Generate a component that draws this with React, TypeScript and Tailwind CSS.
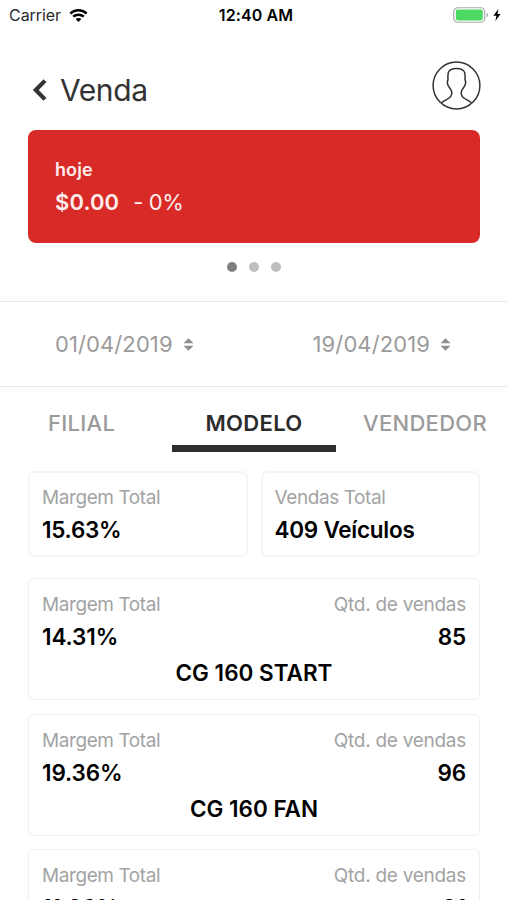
import React from "react";

type Model = { margin: string; count: string; name?: string };

const models: Model[] = [
  { margin: "14.31%", count: "85", name: "CG 160 START" },
  { margin: "19.36%", count: "96", name: "CG 160 FAN" },
  { margin: "11.96%", count: "91" },
];

function StatusBar() {
  return (
    <div className="grid h-[30px] shrink-0 grid-cols-3 items-center pl-[9px] pr-[6px] text-black">
      <div className="flex items-center gap-[8px]">
        <span className="text-[16px] tracking-[-0.05px] text-[#2b2b2b]">Carrier</span>
        <svg width="19" height="13" viewBox="0 0 20 14" fill="none" stroke="#000" strokeWidth="2.7">
          <path d="M1.2 4.9C6 0.3 14 0.3 18.8 4.9" />
          <path d="M4.3 8.3C7.4 5.4 12.6 5.4 15.7 8.3" />
          <path d="M10 14L6.9 10.9C8.6 9.3 11.4 9.3 13.1 10.9Z" fill="#000" stroke="none" />
        </svg>
      </div>
      <span className="pl-[2px] text-center text-[16px] font-semibold tracking-[0.1px]">12:40 AM</span>
      <div className="flex items-center justify-end gap-[4px]">
        <svg width="36" height="16" viewBox="0 0 36 16">
          <rect x="0.75" y="0.75" width="31" height="14.5" rx="4" fill="#fff" stroke="#a9a9a9" strokeWidth="1.2" />
          <rect x="2.8" y="2.6" width="27" height="10.8" rx="1.8" fill="#4cd964" />
          <path d="M33.6 5.5C35.6 6.5 35.6 9.5 33.6 10.5Z" fill="#a9a9a9" />
        </svg>
        <svg width="8" height="12" viewBox="0 0 8 12">
          <path d="M5.4 0L0.4 6.8H3.4L2.4 12L7.6 4.9H4.5Z" fill="#000" />
        </svg>
      </div>
    </div>
  );
}

function Header() {
  return (
    <header className="flex h-[100px] shrink-0 items-center pl-[32px] pr-[26px] pt-[20px]">
      <svg width="15" height="22" viewBox="0 0 15 22" fill="none" stroke="#333" strokeWidth="4.2">
        <path d="M13 1.6L3.8 11L13 20.4" />
      </svg>
      <h1 className="ml-[13px] flex-1 text-[30px] leading-[40px] tracking-[-0.4px] text-[#333]">Venda</h1>
      <svg className="mb-[9px]" width="49" height="49" viewBox="0 0 49 49" fill="none" stroke="#333" strokeWidth="1.5">
        <circle cx="24.5" cy="24.5" r="23.4" />
        <path d="M9.7 41.6C12.5 39.4 15.8 38.3 17.8 36.5C19.8 34.7 20.2 31.8 19.2 29.3C18.3 27.3 16.2 25.8 15.6 23.2C15.1 21 15.4 19.8 16 18.4C15.8 15.8 15.8 13.6 16.3 11.6C17.2 8.6 20 7.4 24.5 7.4C29 7.4 31.8 8.6 32.7 11.6C33.2 13.6 33.2 15.8 33 18.4C33.6 19.8 33.9 21 33.4 23.2C32.8 25.8 30.7 27.3 29.8 29.3C28.8 31.8 29.2 34.7 31.2 36.5C33.2 38.3 36.5 39.4 39.3 41.6" />
      </svg>
    </header>
  );
}

function DateField({ value }: { value: string }) {
  return (
    <div className="flex items-center gap-[10px]">
      <span className="text-[22px] tracking-[0.1px] text-[#9b9b9b]">{value}</span>
      <svg width="11" height="13" viewBox="0 0 11 13" fill="#8e8e8e">
        <path d="M5.5 0.2L10.5 5.3H0.5Z" />
        <path d="M5.5 12.8L10.5 7.7H0.5Z" />
      </svg>
    </div>
  );
}

function Summary({ label, value }: { label: string; value: string }) {
  return (
    <div className="h-[86px] flex-1 rounded-[6px] border-2 border-[#f5f5f5] pl-[12px] pt-[11px]">
      <div className="text-[19px] leading-[27px] tracking-[-0.42px] text-[#a3a3a3]">{label}</div>
      <div className="text-[22.5px] leading-[38px] font-semibold tracking-[-0.25px] text-black">{value}</div>
    </div>
  );
}

function ModelCard({ model }: { model: Model }) {
  return (
    <div className="h-[122px] shrink-0 rounded-[6px] border border-[#efefef] px-[13px] pt-[13px]">
      <div className="flex justify-between text-[19px] leading-[26px] text-[#a3a3a3]">
        <span className="tracking-[-0.42px]">Margem Total</span>
        <span className="tracking-[-0.27px]">Qtd. de vendas</span>
      </div>
      <div className="flex justify-between text-[22.5px] leading-[38px] font-semibold tracking-[-0.1px] text-black">
        <span>{model.margin}</span>
        <span>{model.count}</span>
      </div>
      {model.name && (
        <div className="text-center text-[22.5px] leading-[34px] font-semibold text-black">{model.name}</div>
      )}
    </div>
  );
}

export default function App() {
  return (
    <div className="flex h-[900px] w-[507px] flex-col overflow-hidden bg-white font-['Inter',sans-serif]">
      <StatusBar />
      <Header />
      <section className="ml-[28px] mr-[27px] h-[113px] shrink-0 rounded-[8px] bg-[#d82b28] pl-[27px] pt-[25px] text-[#fdeeee]">
        <div className="text-[18px] leading-[30px] font-semibold tracking-[0.1px]">hoje</div>
        <div className="flex gap-[14px] text-[22px] leading-[35px]">
          <span className="font-semibold tracking-[0.1px]">$0.00</span>
          <span className="tracking-[-0.4px]">- 0%</span>
        </div>
      </section>
      <div className="flex h-[58px] shrink-0 justify-center gap-[12px] pt-[19px]">
        <span className="size-[10px] rounded-full bg-[#7f7f7f]" />
        <span className="size-[10px] rounded-full bg-[#bfbfbf]" />
        <span className="size-[10px] rounded-full bg-[#bfbfbf]" />
      </div>
      <section className="flex h-[86px] shrink-0 items-center justify-between border-y border-[#e9e9e9] pl-[55px] pr-[56px]">
        <DateField value="01/04/2019" />
        <DateField value="19/04/2019" />
      </section>
      <nav className="flex h-[65px] shrink-0 text-[22px] font-medium tracking-[0.3px] text-[#9b9b9b]">
        <span className="w-[172px] pl-[48px] leading-[72px]">FILIAL</span>
        <span className="w-[164px] border-b-[7px] border-[#2e2e2e] text-center leading-[72px] font-semibold text-[#2b2b2b]">MODELO</span>
        <span className="pl-[27px] leading-[72px]">VENDEDOR</span>
      </nav>
      <div className="ml-[28px] mr-[27px] mt-[19px] flex shrink-0 gap-[13px]">
        <Summary label="Margem Total" value="15.63%" />
        <Summary label="Vendas Total" value="409 Veículos" />
      </div>
      <div className="ml-[28px] mr-[27px] mt-[21px] flex flex-col gap-[13.5px]">
        {models.map((m) => (
          <ModelCard key={m.margin} model={m} />
        ))}
      </div>
    </div>
  );
}
